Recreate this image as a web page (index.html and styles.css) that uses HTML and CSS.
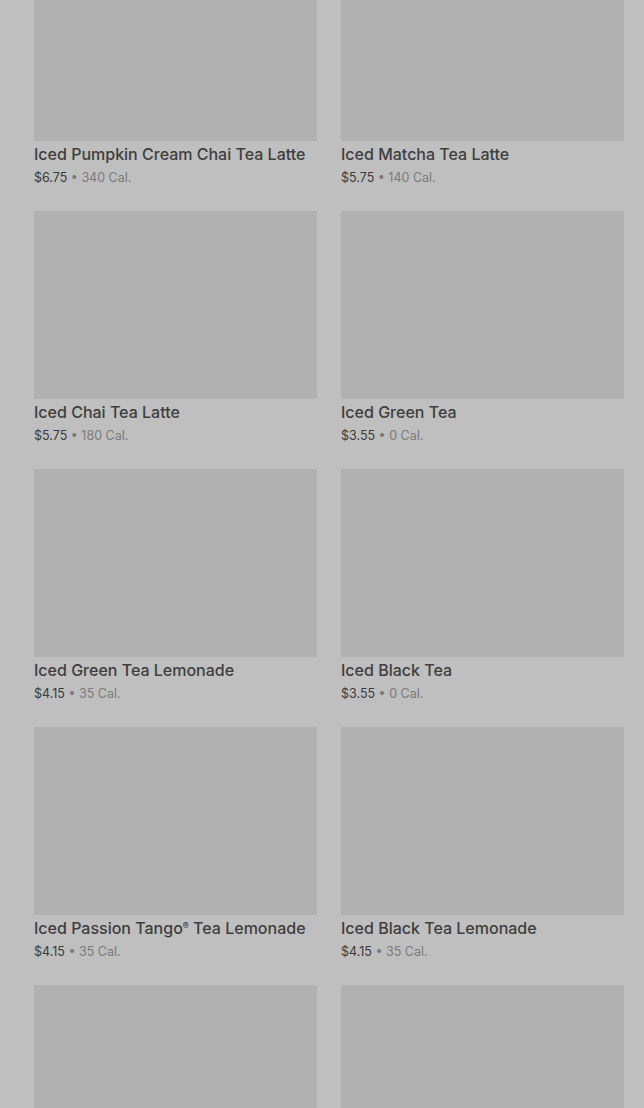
FILE: index.html
```html
<!DOCTYPE html>
<html>
<head>
<meta charset="utf-8">
<link rel="stylesheet" href="styles.css">
</head>
<body>
<main class="menu-grid">
  <div class="item"><div class="thumb"></div><div class="name">Iced Pumpkin Cream Chai Tea Latte</div><div class="meta"><span class="price">$6.75</span> • 340 Cal.</div></div>
  <div class="item"><div class="thumb"></div><div class="name">Iced Matcha Tea Latte</div><div class="meta"><span class="price">$5.75</span> • 140 Cal.</div></div>
  <div class="item"><div class="thumb"></div><div class="name">Iced Chai Tea Latte</div><div class="meta"><span class="price">$5.75</span> • 180 Cal.</div></div>
  <div class="item"><div class="thumb"></div><div class="name">Iced Green Tea</div><div class="meta"><span class="price">$3.55</span> • 0 Cal.</div></div>
  <div class="item"><div class="thumb"></div><div class="name">Iced Green Tea Lemonade</div><div class="meta"><span class="price">$4.15</span> • 35 Cal.</div></div>
  <div class="item"><div class="thumb"></div><div class="name">Iced Black Tea</div><div class="meta"><span class="price">$3.55</span> • 0 Cal.</div></div>
  <div class="item"><div class="thumb"></div><div class="name">Iced Passion Tango<span class="reg">®</span> Tea Lemonade</div><div class="meta"><span class="price">$4.15</span> • 35 Cal.</div></div>
  <div class="item"><div class="thumb"></div><div class="name">Iced Black Tea Lemonade</div><div class="meta"><span class="price">$4.15</span> • 35 Cal.</div></div>
  <div class="item"><div class="thumb"></div></div>
  <div class="item"><div class="thumb"></div></div>
</main>
</body>
</html>
```
FILE: styles.css
```css
html, body {
  margin: 0;
  padding: 0;
  background: #bfbfbf;
  overflow: hidden;
}
body {
  font-family: Inter, Roboto, "Liberation Sans", sans-serif;
}
.menu-grid {
  display: grid;
  grid-template-columns: 283px 283px;
  column-gap: 24px;
  row-gap: 23px;
  padding: 0 20px 0 34px;
  margin-top: -47px;
}
.thumb {
  height: 188px;
  background: #b1b1b1;
}
.name {
  margin-top: 1px;
  font-size: 16px;
  font-weight: 500;
  line-height: 24px;
  color: #3e3e3e;
  white-space: nowrap;
}
.reg {
  font-size: 9px;
  vertical-align: 5px;
  line-height: 0;
}
.meta {
  margin-top: 2px;
  font-size: 12.5px;
  line-height: 20px;
  color: #7a7a7a;
}
.price {
  color: #3a3a3a;
}
```
